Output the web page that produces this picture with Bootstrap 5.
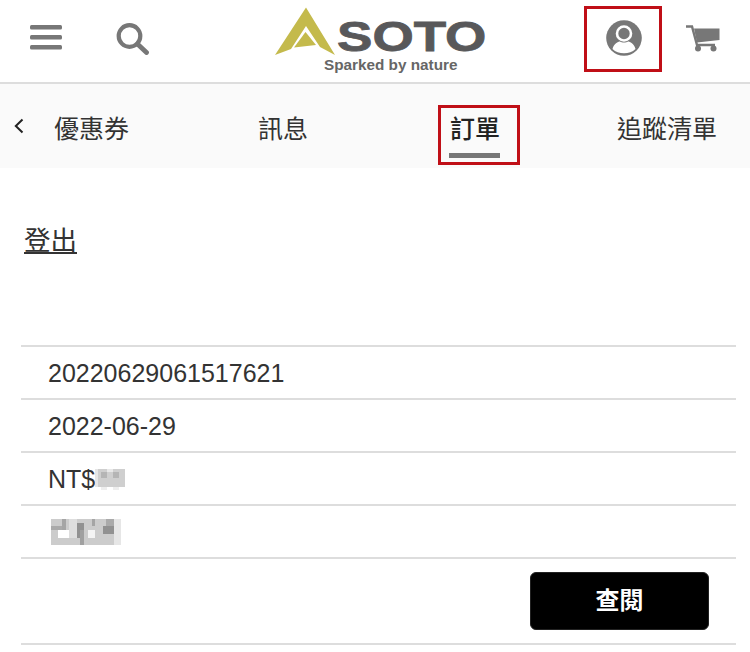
<!doctype html>
<html lang="zh-Hant">
<head>
<meta charset="utf-8">
<title>SOTO</title>
<link href="https://cdn.jsdelivr.net/npm/bootstrap@5.3.0/dist/css/bootstrap.min.css" rel="stylesheet">
<style>
html,body{height:652px;overflow:hidden;background:#fff}
body{font-family:"Liberation Sans","Noto Sans CJK TC",sans-serif;color:#333}
.top-bar{height:84px;border-bottom:2px solid #ddd;background:#fff;padding-bottom:5px}
.ico{display:block;flex:none}
.ico-menu{margin-left:30px;margin-top:-2px}
.ico-search{margin-left:54px}
.logo-wrap{margin-left:124px;width:212px;height:70px;position:relative;flex:none}
.logo-mark{margin-top:-3px}
.logo-word{position:absolute;left:63px;top:12px;font-size:43px;line-height:40px;font-weight:700;color:#58585a;transform:scaleX(1.234);transform-origin:left top;-webkit-text-stroke:.8px #58585a}
.logo-tag{position:absolute;left:50px;top:52.500px;font-size:15.300px;line-height:17px;font-weight:700;color:#666;white-space:nowrap}
.user-box{margin-left:98px;width:78px;height:66px;border:3px solid #c00f17;flex:none;padding:0 0 2px 2px}
.ico-cart{margin-left:24px}
.sub-nav{height:84px;background:#fafafa;font-size:25px;color:#333}
.chev{margin-left:14px;flex:none}
.tab-a{margin-left:30px;width:204px;flex:none;padding-top:8px}
.tab-b{width:180px;flex:none;padding-top:8px}
.tab-active{width:82px;height:60px;border:3px solid #c00f17;padding:5px 0 0 9px;flex:none;align-self:flex-start;margin-top:21px;font-weight:500;color:#222;line-height:32px}
.tab-bar{width:51px;height:5px;background:#777;margin:8px 0 0 -1px}
.tab-c{margin-left:97px;white-space:nowrap;flex:none;padding-top:8px}
.logout-link{font-size:26.500px;color:#333;line-height:30px;margin:58px 0 0 24px;display:inline-block;text-decoration:underline;text-underline-offset:2px;text-decoration-thickness:1.500px}
.order-list{margin:88px 14px 0 21px;border-top:2px solid #ddd}
.order-row{height:53px;border-bottom:2px solid #ddd;padding:0 0 0 27px;font-size:25px;line-height:50px;color:#333;display:flex;align-items:center}
.order-btn-row{height:86px;border-bottom:2px solid #ddd;padding:13px 27px 0 0}
.view-btn{width:179px;height:58px;background:#000;color:#fff;border:1px solid #222;border-radius:6px;font-size:24px;font-weight:700;line-height:1;padding:0}
.view-btn:hover{background:#000;color:#fff}
</style>
</head>
<body>
<header class="top-bar d-flex align-items-center">
  <svg class="ico ico-menu" width="32" height="25" viewBox="0 0 32 25" aria-label="選單"><rect y="0" width="32" height="4.500" rx="1.500" fill="#777"/><rect y="10" width="32" height="4.500" rx="1.500" fill="#777"/><rect y="20" width="32" height="4.500" rx="1.500" fill="#777"/></svg>
  <svg class="ico ico-search" width="34" height="32" viewBox="0 0 34 32" aria-label="搜尋"><circle cx="13.500" cy="13" r="10.800" fill="none" stroke="#777" stroke-width="4.200"/><path d="M21.500 21L30.500 29.500" stroke="#777" stroke-width="4.800" stroke-linecap="round"/></svg>
  <div class="logo-wrap">
    <svg class="ico logo-mark" width="64" height="56" viewBox="0 0 64 56"><path d="M32 6.500L61 54L46 46L32 25L17 48L1 54Z" fill="#c4ba4c"/><path d="M31.500 31L42 44L20 46.500Z" fill="#c4ba4c"/></svg>
    <span class="logo-word">SOTO</span>
    <span class="logo-tag">Sparked by nature</span>
  </div>
  <div class="user-box d-flex align-items-center justify-content-center">
    <svg class="ico" width="36" height="36" viewBox="0 0 36 36" aria-label="會員"><circle cx="18" cy="18" r="17.800" fill="#777"/><circle cx="18" cy="13.500" r="7" fill="none" stroke="#fff" stroke-width="2.600"/><path d="M6.500 29C8 23.500 12 21.500 14 21.500C16 22.800 20 22.800 22 21.500C24 21.500 28 23.500 29.500 29C26.500 32 22.500 33.300 18 33.300C13.500 33.300 9.500 32 6.500 29Z" fill="#fff"/></svg>
  </div>
  <svg class="ico ico-cart" width="34" height="27" viewBox="0 0 34 27" aria-label="購物車"><path d="M0 1.500H6L11 20H29" fill="none" stroke="#777" stroke-width="2.400"/><path d="M8 3.500H33.500V15L11 17.500Z" fill="#777"/><circle cx="12" cy="23.500" r="3" fill="#777"/><circle cx="27.500" cy="23.500" r="3" fill="#777"/></svg>
</header>

<nav class="sub-nav d-flex align-items-center">
  <svg class="ico chev" width="10" height="16" viewBox="0 0 10 16" aria-label="上一頁"><path d="M8.500 1.500L1.800 8L8.500 14.500" fill="none" stroke="#222" stroke-width="2"/></svg>
  <div class="tab-a">優惠券</div>
  <div class="tab-b">訊息</div>
  <div class="tab-active">訂單<div class="tab-bar"></div></div>
  <div class="tab-c">追蹤清單</div>
</nav>

<main>
  <a class="logout-link" href="#">登出</a>
  <div class="order-list">
    <div class="order-row">20220629061517621</div>
    <div class="order-row">2022-06-29</div>
    <div class="order-row">NT$<svg class="ico" width="30" height="22" viewBox="0 0 10 7" shape-rendering="crispEdges"><rect width="10" height="6" fill="#cfcfcf"/><rect x="0" y="0" width="1" height="6" fill="#e6e6e6"/><rect x="2" y="1" width="2" height="2" fill="#b5b5b5"/><rect x="6" y="1" width="2" height="2" fill="#b5b5b5"/><rect x="4" y="0" width="2" height="1" fill="#e8e8e8"/><rect x="2" y="6" width="2" height="1" fill="#eee"/><rect x="6" y="6" width="2" height="1" fill="#eee"/></svg></div>
    <div class="order-row"><svg class="ico" width="76" height="26" viewBox="0 0 19 7" shape-rendering="crispEdges"><rect width="19" height="7" fill="#cccccc"/><rect x="0" y="2" width="3" height="1" fill="#aaa"/><rect x="3" y="0" width="1" height="3" fill="#a5a5a5"/><rect x="2" y="3" width="3" height="2" fill="#fff"/><rect x="5" y="0" width="2" height="5" fill="#dedede"/><rect x="7" y="1" width="2" height="4" fill="#919191"/><rect x="8" y="3" width="1" height="4" fill="#a0a0a0"/><rect x="10" y="3" width="2" height="2" fill="#f4f4f4"/><rect x="11" y="0" width="1" height="2" fill="#a5a5a5"/><rect x="14" y="2" width="3" height="2" fill="#919191"/><rect x="15" y="0" width="2" height="2" fill="#aaa"/><rect x="17" y="0" width="2" height="7" fill="#e6e6e6"/></svg></div>
    <div class="order-btn-row d-flex justify-content-end align-items-start">
      <button type="button" class="btn view-btn">查閱</button>
    </div>
  </div>
</main>
<script src="https://cdn.jsdelivr.net/npm/bootstrap@5.3.0/dist/js/bootstrap.bundle.min.js"></script>
</body>
</html>
